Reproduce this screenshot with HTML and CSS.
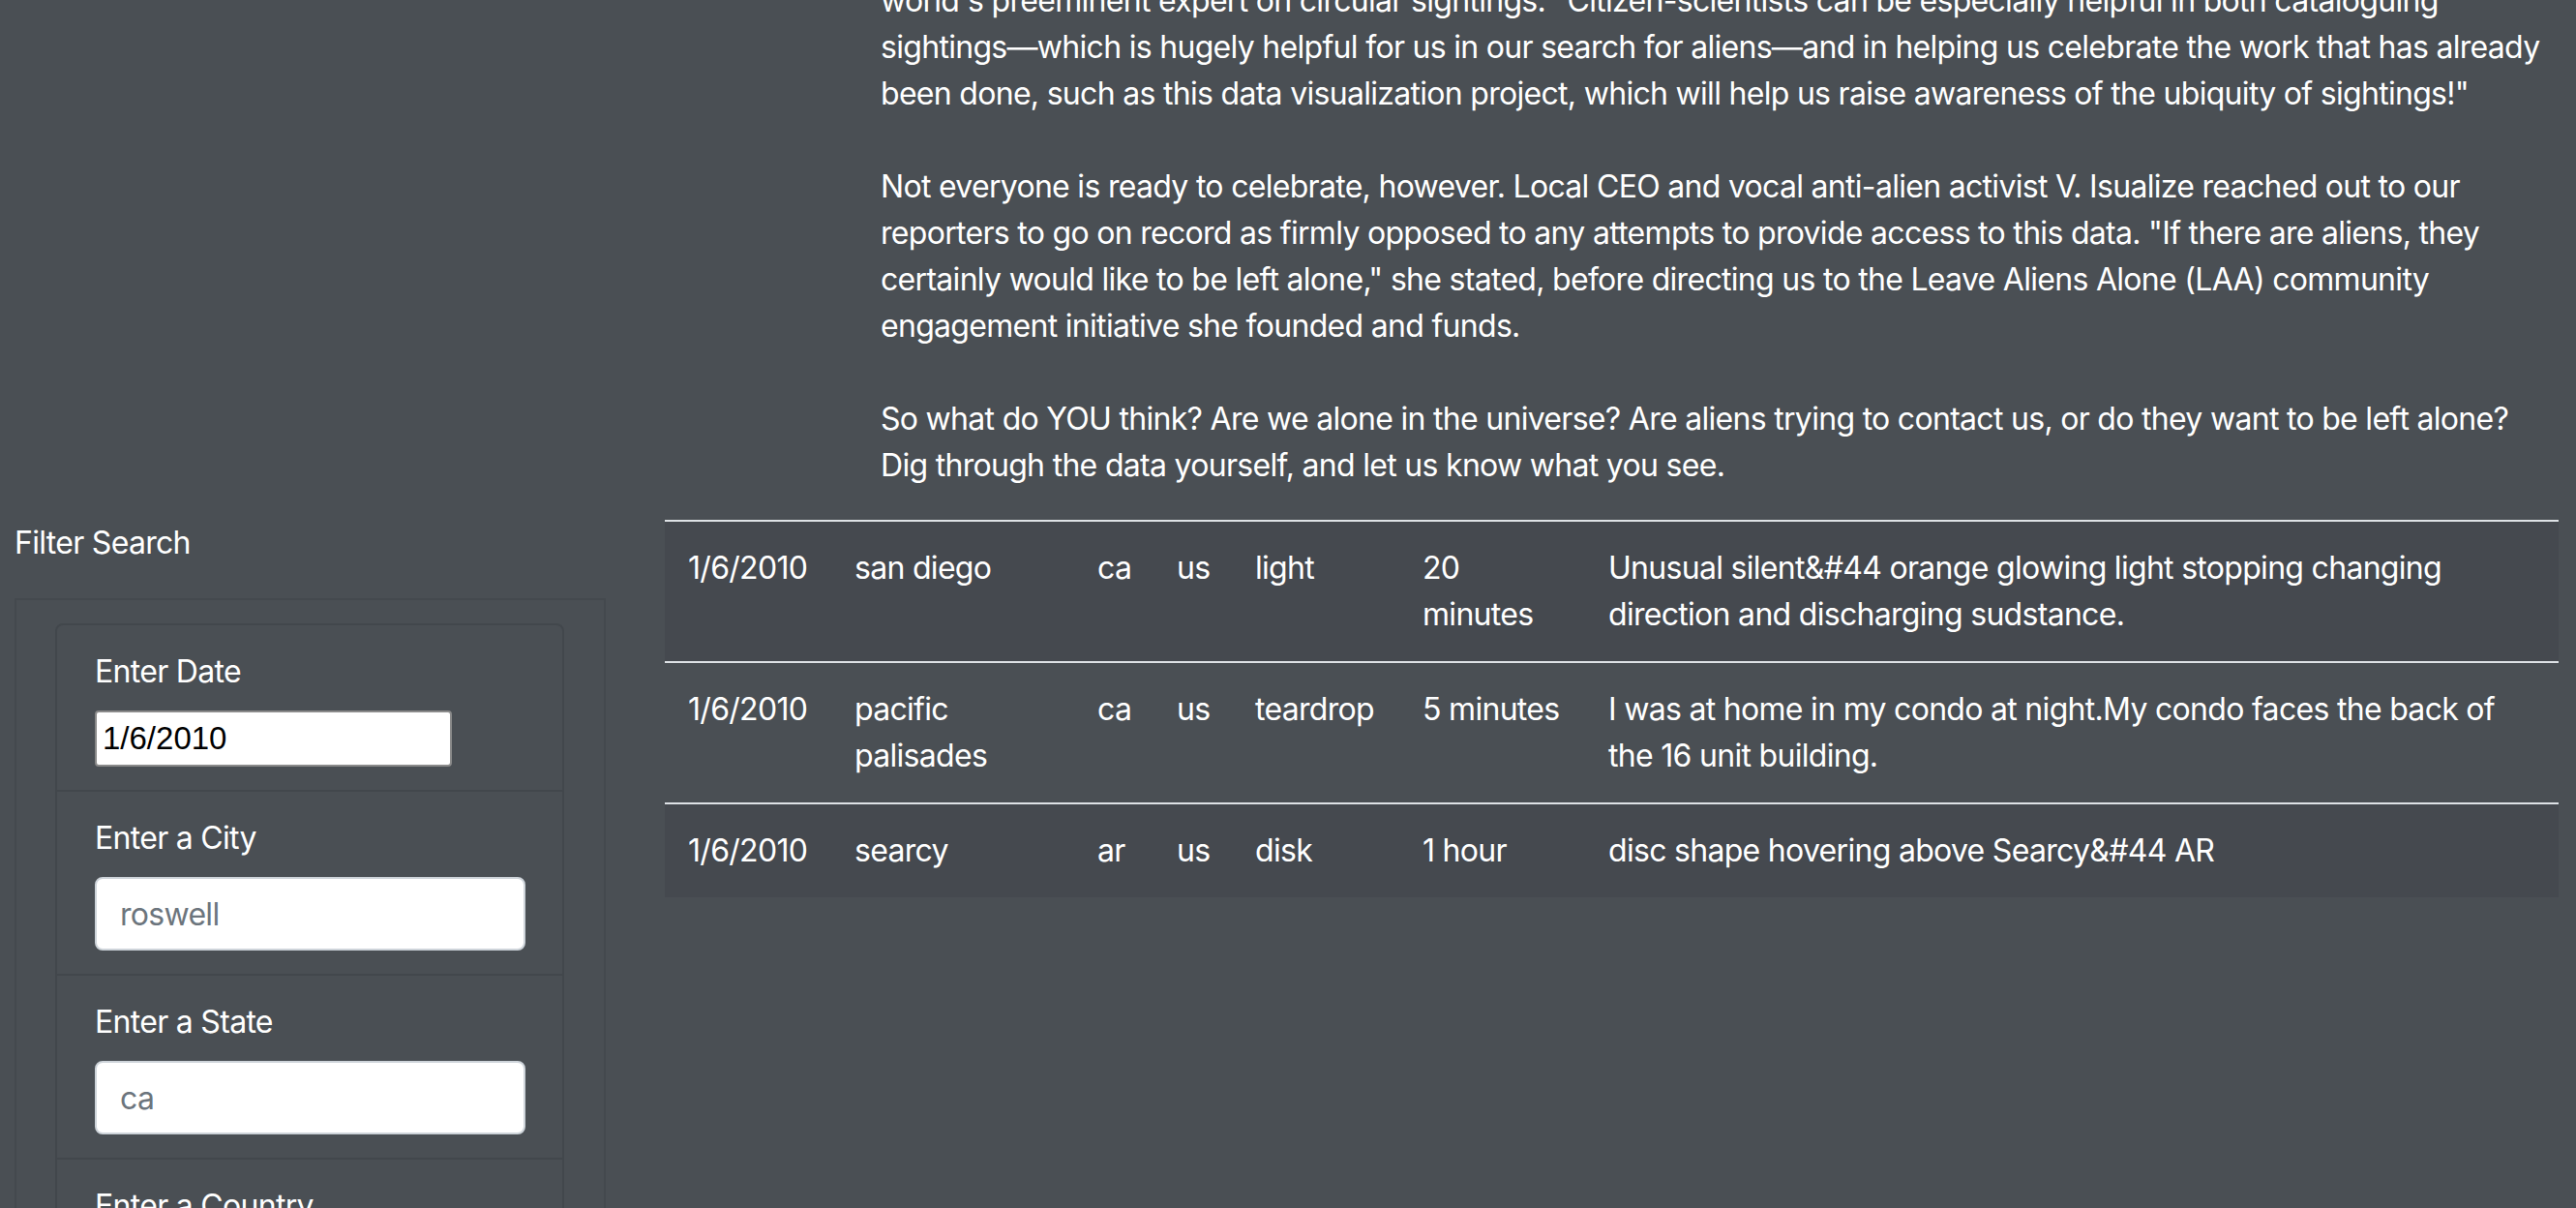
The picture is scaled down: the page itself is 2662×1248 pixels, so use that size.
FILE: index.html
```html
<!DOCTYPE html>
<html lang="en">
<head>
<meta charset="utf-8">
<title>UFO Sightings</title>
<link rel="stylesheet" href="styles.css">
</head>
<body>
<div class="page">
  <div class="article-row">
    <article class="article">
      <p class="para">world's preeminent expert on circular sightings. "Citizen-scientists can be especially helpful in both cataloguing sightings—which is hugely helpful for us in our search for aliens—and in helping us celebrate the work that has already been done, such as this data visualization project, which will help us raise awareness of the ubiquity of sightings!"</p>
      <p class="para">Not everyone is ready to celebrate, however. Local CEO and vocal anti-alien activist V. Isualize reached out to our reporters to go on record as firmly opposed to any attempts to provide access to this data. "If there are aliens, they certainly would like to be left alone," she stated, before directing us to the Leave Aliens Alone (LAA) community engagement initiative she founded and funds.</p>
      <p class="para last">So what do YOU think? Are we alone in the universe? Are aliens trying to contact us, or do they want to be left alone? Dig through the data yourself, and let us know what you see.</p>
    </article>
  </div>
  <div class="main-row">
    <aside class="sidebar">
      <div class="filter-title">Filter Search</div>
      <div class="well">
        <ul class="filters">
          <li class="filter">
            <label class="filter-label" for="datetime">Enter Date</label>
            <input class="date-input" id="datetime" type="text" value="1/6/2010">
          </li>
          <li class="filter">
            <label class="filter-label" for="city">Enter a City</label>
            <input class="form-control" id="city" type="text" placeholder="roswell">
          </li>
          <li class="filter">
            <label class="filter-label" for="state">Enter a State</label>
            <input class="form-control" id="state" type="text" placeholder="ca">
          </li>
          <li class="filter">
            <label class="filter-label" for="country">Enter a Country</label>
            <input class="form-control" id="country" type="text" placeholder="us">
          </li>
        </ul>
      </div>
    </aside>
    <section class="results">
      <table class="ufo-table">
        <colgroup>
          <col class="c-date"><col class="c-city"><col class="c-state"><col class="c-country"><col class="c-shape"><col class="c-duration"><col class="c-comments">
        </colgroup>
        <tbody>
          <tr class="odd">
            <td>1/6/2010</td><td>san diego</td><td>ca</td><td>us</td><td>light</td><td>20 minutes</td><td>Unusual silent&amp;#44 orange glowing light stopping changing direction and discharging sudstance.</td>
          </tr>
          <tr>
            <td>1/6/2010</td><td>pacific palisades</td><td>ca</td><td>us</td><td>teardrop</td><td>5 minutes</td><td>I was at home in my condo at night.My condo faces the back of the 16 unit building.</td>
          </tr>
          <tr class="odd">
            <td>1/6/2010</td><td>searcy</td><td>ar</td><td>us</td><td>disk</td><td>1 hour</td><td>disc shape hovering above Searcy&amp;#44 AR</td>
          </tr>
        </tbody>
      </table>
    </section>
  </div>
</div>
</body>
</html>
```

FILE: styles.css
```css
html, body {
  margin: 0;
  padding: 0;
  background: #4a4f54;
  height: 100%;
  overflow: hidden;
}

body {
  font-family: Inter, "Noto Sans", "Liberation Sans", sans-serif;
  font-size: 32px;
  line-height: 48px;
  letter-spacing: -0.7px;
  color: #ffffff;
}

.page {
  width: 2662px;
}

.article-row {
  display: flex;
}

.article {
  margin-top: -23px;
  margin-left: 910px;
  width: 1737px;
}

.para {
  margin: 0 0 48px 0;
}

.para.last {
  margin-bottom: 32px;
}

.main-row {
  display: grid;
  grid-template-columns: 611px 1957px;
  column-gap: 61px;
  padding-left: 15px;
}

.filter-title {
  margin-bottom: 33px;
}

.well {
  border: 2px solid #44494e;
  border-bottom: none;
  padding: 24px 41px 0 40px;
}

.filters {
  list-style: none;
  margin: 0;
  padding: 0;
  border: 2px solid #42474c;
  border-radius: 8px 8px 0 0;
}

.filter {
  padding: 24px 38px 24px 39px;
  border-bottom: 2px solid #42474c;
  display: flex;
  flex-direction: column;
  align-items: flex-start;
}

.filter-label {
  margin-bottom: 16px;
}

.date-input {
  box-sizing: border-box;
  width: 369px;
  height: 58px;
  padding: 2px 6px;
  margin: 0;
  border: 2px solid #8a8a8a;
  border-radius: 4px;
  background: #ffffff;
  color: #000000;
  font-family: "Liberation Sans", Arial, sans-serif;
  font-size: 33px;
  letter-spacing: 0;
}

.form-control {
  box-sizing: border-box;
  width: 100%;
  height: 76px;
  margin: 0;
  padding: 12px 24px;
  border: 2px solid #ced4da;
  border-radius: 8px;
  background: #ffffff;
  color: #495057;
  font-family: Inter, "Noto Sans", sans-serif;
  font-size: 32px;
  line-height: 48px;
  letter-spacing: -0.7px;
}

.form-control::placeholder {
  color: #6c757d;
  opacity: 1;
}

.ufo-table {
  width: 1957px;
  border-collapse: collapse;
  table-layout: fixed;
}

.c-date { width: 172px; }
.c-city { width: 251px; }
.c-state { width: 82px; }
.c-country { width: 81px; }
.c-shape { width: 173px; }
.c-duration { width: 192px; }
.c-comments { width: 1006px; }

.ufo-table td {
  padding: 24px;
  vertical-align: top;
  border-top: 2px solid #dee2e6;
  color: #ffffff;
}

.ufo-table tr.odd {
  background: #45494f;
}
```
